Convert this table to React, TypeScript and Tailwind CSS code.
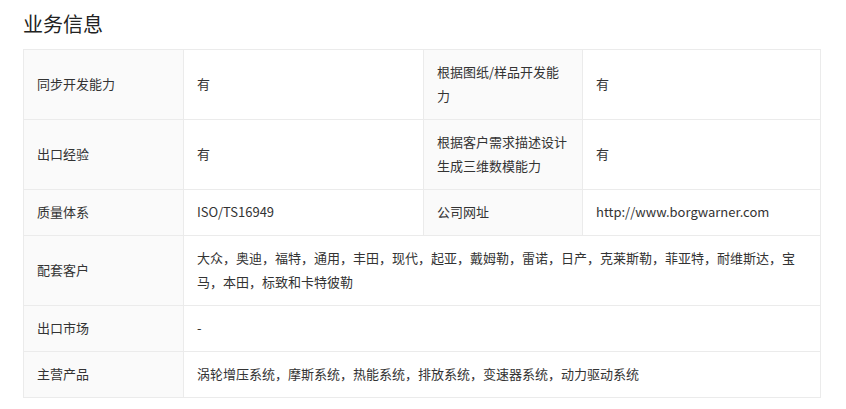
import React from "react";

const font = { fontFamily: '"Microsoft YaHei", "Noto Sans CJK SC", sans-serif' };

const Label = ({ children }: { children: React.ReactNode }) => (
  <td className="border border-[#ebebeb] bg-[#fafafa] px-[13px] pt-[10px] pb-[11px] align-middle">
    {children}
  </td>
);

const Value = ({
  children,
  colSpan,
}: {
  children: React.ReactNode;
  colSpan?: number;
}) => (
  <td
    colSpan={colSpan}
    className="border border-[#ebebeb] bg-white px-[13px] pt-[10px] pb-[11px] align-middle"
  >
    {children}
  </td>
);

const App = () => {
  return (
    <section className="bg-white px-[23px] pt-[10px] pb-[10px] text-[#333]" style={font}>
      <h2 className="text-[20px] leading-[28px] font-normal text-[#222] mb-[11px]">
        业务信息
      </h2>
      <table className="w-[797px] table-fixed border-collapse text-[13px] leading-[24px]">
        <colgroup>
          <col className="w-[160px]" />
          <col className="w-[240px]" />
          <col className="w-[159px]" />
          <col className="w-[238px]" />
        </colgroup>
        <tbody>
          <tr>
            <Label>同步开发能力</Label>
            <Value>有</Value>
            <Label>根据图纸/样品开发能力</Label>
            <Value>有</Value>
          </tr>
          <tr>
            <Label>出口经验</Label>
            <Value>有</Value>
            <Label>根据客户需求描述设计生成三维数模能力</Label>
            <Value>有</Value>
          </tr>
          <tr>
            <Label>质量体系</Label>
            <Value>ISO/TS16949</Value>
            <Label>公司网址</Label>
            <Value>http://www.borgwarner.com</Value>
          </tr>
          <tr>
            <Label>配套客户</Label>
            <Value colSpan={3}>
              大众，奥迪，福特，通用，丰田，现代，起亚，戴姆勒，雷诺，日产，克莱斯勒，菲亚特，耐维斯达，宝马，本田，标致和卡特彼勒
            </Value>
          </tr>
          <tr>
            <Label>出口市场</Label>
            <Value colSpan={3}>-</Value>
          </tr>
          <tr>
            <Label>主营产品</Label>
            <Value colSpan={3}>
              涡轮增压系统，摩斯系统，热能系统，排放系统，变速器系统，动力驱动系统
            </Value>
          </tr>
        </tbody>
      </table>
    </section>
  );
};

export default App;
